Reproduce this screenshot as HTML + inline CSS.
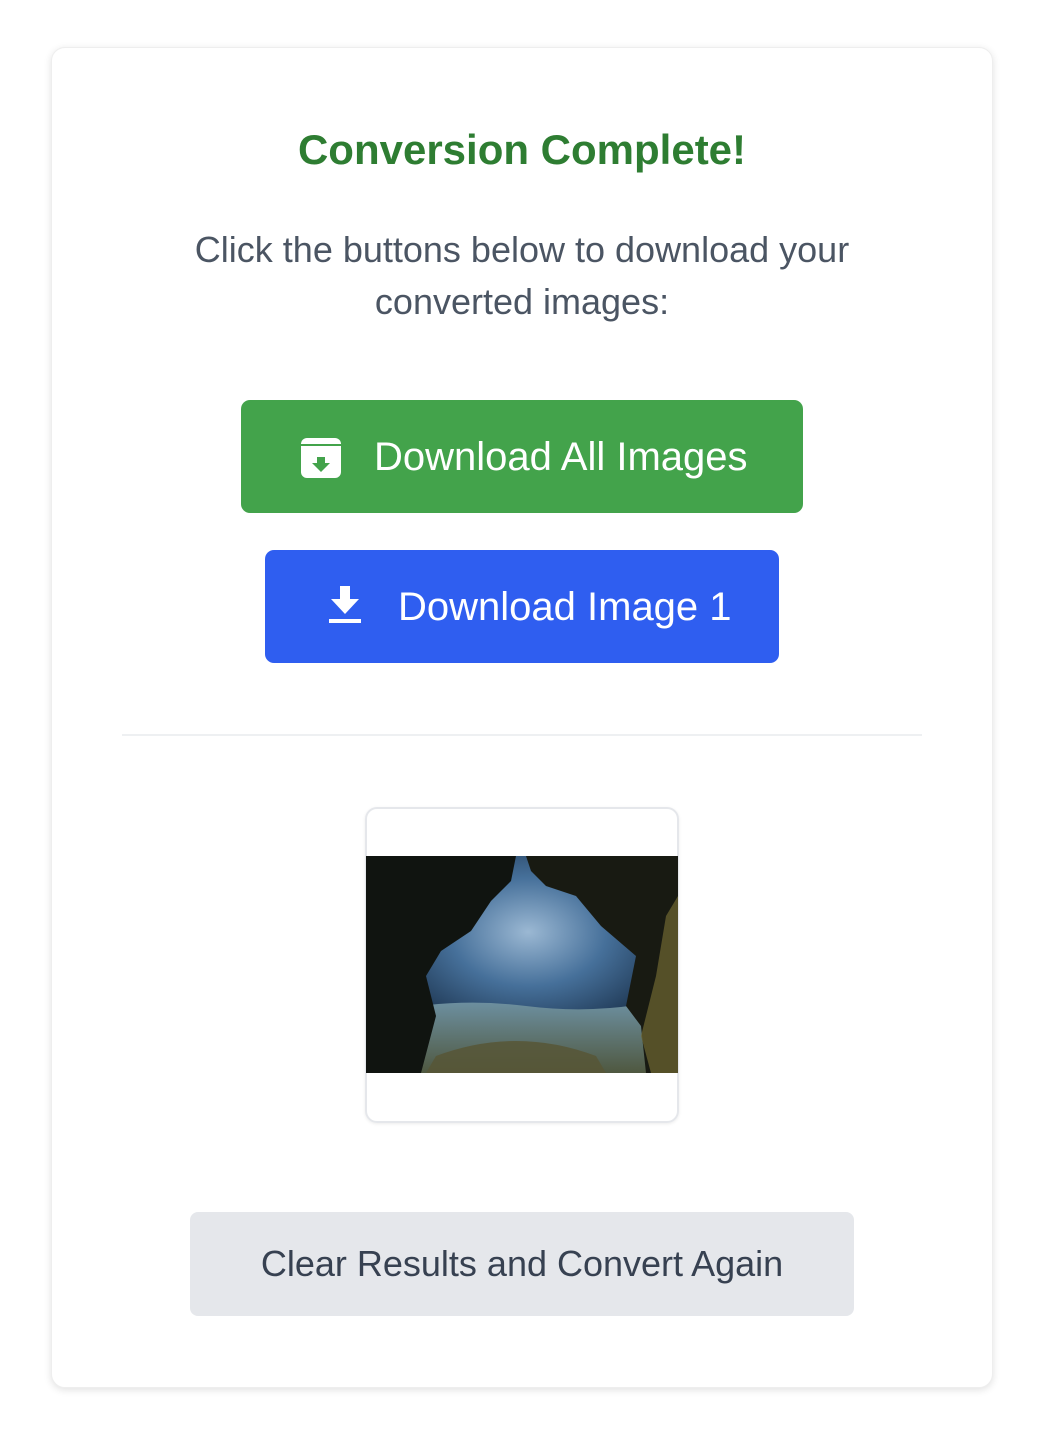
<!DOCTYPE html>
<html><head><style>
body{margin:0;width:1056px;height:1432px;background:#fff;font-family:"Liberation Sans",sans-serif;position:relative}
.card{position:absolute;left:51px;top:47px;width:942px;height:1341px;border-radius:14px;background:#fff;box-shadow:0 2px 8px rgba(0,0,0,.12);border:1px solid #eee;box-sizing:border-box}
.abs{position:absolute}
h1{position:absolute;left:0;width:1044px;top:126px;margin:0;text-align:center;font-size:42px;color:#2e7d32;font-weight:bold}
.p{position:absolute;left:0;width:1044px;top:224px;text-align:center;font-size:36px;line-height:52px;color:#4b5563}
.btn{position:absolute;border-radius:9px;color:#fff;font-size:40px;display:flex;align-items:center}
</style></head><body>
<div class="card"></div>
<h1>Conversion Complete!</h1>
<div class="p">Click the buttons below to download your<br>converted images:</div>
<div class="btn" style="left:241px;top:400px;width:562px;height:113px;background:#43a34b">
<svg class="abs" style="left:59px;top:37px" width="42" height="42" viewBox="0 0 42 42"><rect x="1" y="1" width="40" height="40" rx="6" fill="#fff"/><rect x="1" y="7" width="40" height="2" fill="#43a34b"/><path d="M17 20h8v6h5l-9 9-9-9h5z" fill="#43a34b"/></svg>
<span class="abs" style="left:133px;top:35px">Download All Images</span></div>
<div class="btn" style="left:265px;top:550px;width:514px;height:113px;background:#2f5ef0">
<svg class="abs" style="left:63px;top:36px" width="34" height="40" viewBox="0 0 34 40"><path d="M12 0h10v13h9L17 28 3 13h9z" fill="#fff"/><rect x="1" y="33" width="32" height="4" fill="#fff"/></svg>
<span class="abs" style="left:133px;top:35px">Download Image 1</span></div>
<div class="abs" style="left:122px;top:734px;width:800px;height:2px;background:#eef0f2"></div>
<div class="abs" style="left:365px;top:807px;width:314px;height:316px;border:2px solid #e5e7eb;border-radius:12px;box-sizing:border-box;box-shadow:0 1px 3px rgba(0,0,0,.08)"></div>
<svg class="abs" style="left:366px;top:856px" width="312" height="217" viewBox="0 0 312 217">
<defs><radialGradient id="w" cx="0.52" cy="0.35" r="0.5"><stop offset="0" stop-color="#9bb8d3"/><stop offset="0.5" stop-color="#46709a"/><stop offset="1" stop-color="#1d3550"/></radialGradient>
<linearGradient id="f" x1="0" y1="0" x2="0" y2="1"><stop offset="0" stop-color="#6f94a8"/><stop offset="1" stop-color="#4f5840"/></linearGradient></defs>
<rect width="312" height="217" fill="url(#w)"/>
<path d="M0 160 Q80 140 160 150 T312 140 V217 H0z" fill="url(#f)"/>
<path d="M0 0 H150 L145 25 L125 45 L105 75 L75 95 L60 120 L70 160 L55 217 H0z" fill="#101410"/>
<path d="M160 0 H312 V217 H280 L275 170 L260 150 L270 100 L235 70 L210 40 L180 30 L165 15z" fill="#181a12"/>
<path d="M275 180 L290 120 L300 60 L312 40 V217 H285z" fill="#6a6330" opacity=".75"/>
<path d="M70 200 Q150 170 230 200 L240 217 H60z" fill="#575636" opacity=".85"/>
</svg>
<div class="abs" style="left:190px;top:1212px;width:664px;height:104px;background:#e5e7eb;border-radius:8px;text-align:center;line-height:104px;font-size:36px;color:#374151">Clear Results and Convert Again</div>
</body></html>
